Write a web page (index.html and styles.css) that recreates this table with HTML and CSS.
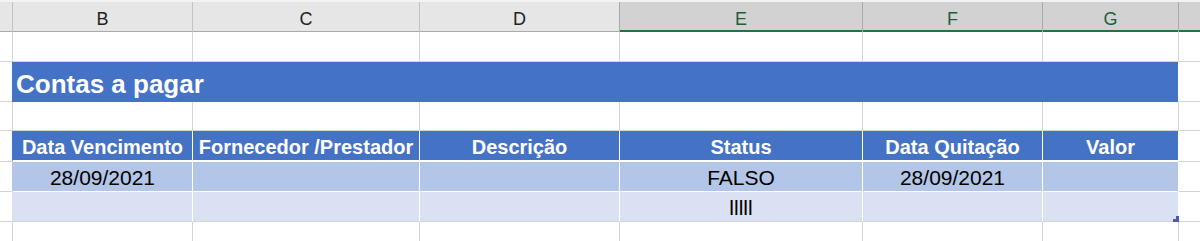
FILE: index.html
```html
<!DOCTYPE html>
<html lang="pt-BR">
<head>
<meta charset="utf-8">
<title>Contas a pagar</title>
<link rel="stylesheet" href="styles.css">
</head>
<body>
<div class="sheet">
  <div class="row col-heads">
    <div class="ch"></div>
    <div class="ch">B</div>
    <div class="ch">C</div>
    <div class="ch">D</div>
    <div class="ch sel">E</div>
    <div class="ch sel">F</div>
    <div class="ch sel">G</div>
    <div class="ch sel"></div>
  </div>

  <div class="row r-blank">
    <div class="c"></div><div class="c"></div><div class="c"></div><div class="c"></div>
    <div class="c"></div><div class="c"></div><div class="c"></div><div class="c"></div>
  </div>

  <div class="row r-title">
    <div class="c"></div>
    <div class="c title">Contas a pagar</div>
    <div class="c after"></div>
  </div>

  <div class="row r-gap">
    <div class="c"></div><div class="c"></div><div class="c"></div><div class="c"></div>
    <div class="c"></div><div class="c"></div><div class="c"></div><div class="c"></div>
  </div>

  <div class="row r-head">
    <div class="c"></div>
    <div class="c th first">Data Vencimento</div>
    <div class="c th">Fornecedor /Prestador</div>
    <div class="c th">Descrição</div>
    <div class="c th">Status</div>
    <div class="c th">Data Quitação</div>
    <div class="c th">Valor</div>
    <div class="c after"></div>
  </div>

  <div class="row r-data">
    <div class="c"></div>
    <div class="c td band1 first">28/09/2021</div>
    <div class="c td band1"></div>
    <div class="c td band1"></div>
    <div class="c td band1">FALSO</div>
    <div class="c td band1">28/09/2021</div>
    <div class="c td band1"></div>
    <div class="c after"></div>
  </div>

  <div class="row r-data">
    <div class="c"></div>
    <div class="c td band2 first"></div>
    <div class="c td band2"></div>
    <div class="c td band2"></div>
    <div class="c td band2">lllll</div>
    <div class="c td band2"></div>
    <div class="c td band2 last-cell"><span class="resize-handle"></span></div>
    <div class="c after"></div>
  </div>

  <div class="row r-tail">
    <div class="c"></div><div class="c"></div><div class="c"></div><div class="c"></div>
    <div class="c"></div><div class="c"></div><div class="c"></div><div class="c"></div>
  </div>
</div>
</body>
</html>
```

FILE: styles.css
```css
html, body {
  margin: 0;
  background: #ffffff;
}

.sheet {
  width: 1200px;
  height: 241px;
  overflow: hidden;
  font-family: "Liberation Sans", Arial, sans-serif;
  color: #000;
}

.row {
  display: grid;
  grid-template-columns: 12px 180px 227px 200px 243px 180px 136px 22px;
}

/* column letters strip */
.col-heads {
  height: 32px;
  padding-top: 2px;
  box-sizing: border-box;
  background: #f3f3f3;
}

.ch {
  box-sizing: border-box;
  background: #e6e6e6;
  border-left: 1px solid #c2c2c2;
  box-shadow: inset 0 -1px #ababab;
  display: flex;
  align-items: flex-end;
  justify-content: center;
  padding-bottom: 4px;
  font-size: 18px;
  line-height: 1;
  color: #222222;
}

.ch:first-child {
  border-left: none;
}

.ch.sel {
  background: #d2d2d2;
  border-left-color: #a9a9a9;
  box-shadow: inset 0 -2px #217346;
  color: #1f5e3d;
}

/* worksheet cells */
.c {
  box-sizing: border-box;
  border-left: 1px solid #d4d4d4;
  border-bottom: 1px solid #d4d4d4;
  display: flex;
  align-items: flex-end;
  justify-content: center;
  line-height: 1;
  white-space: nowrap;
}

.c:first-child {
  border-left: none;
}

.r-blank { height: 30px; }
.r-title { height: 40px; }
.r-gap   { height: 29px; }
.r-head  { height: 31px; }
.r-data  { height: 30px; }
.r-tail  { height: 30px; }

.r-title .title {
  grid-column: span 6;
  background: #4472c4;
  border-left-color: #4472c4;
  border-bottom-color: #4472c4;
  justify-content: flex-start;
  padding: 0 0 4px 3px;
  font-size: 26px;
  font-weight: bold;
  color: #ffffff;
}

.c.after {
  border-left-color: #ffffff;
}

.th {
  background: #4472c4;
  border-left-color: #ffffff;
  border-bottom: 2px solid #ffffff;
  padding-bottom: 3px;
  font-size: 20px;
  font-weight: bold;
  color: #ffffff;
}

.td {
  border-left-color: #ffffff;
  border-bottom-color: #ffffff;
  padding-bottom: 3px;
  font-size: 21px;
  color: #000000;
}

.th.first,
.td.first {
  border-left-color: transparent;
}

.band1 { background: #b4c6e7; }
.band1.first { border-left-color: #b4c6e7; }

.band2 {
  background: #d9e1f2;
  border-bottom-color: #d4d4d4;
}
.band2.first { border-left-color: #d9e1f2; }

.r-head .th.first { border-left-color: #4472c4; }

/* table resize handle in the last cell */
.last-cell {
  position: relative;
}

.resize-handle {
  position: absolute;
  right: -1px;
  bottom: -1px;
  width: 6px;
  height: 6px;
  background:
    linear-gradient(#4a5bb3, #4a5bb3) right top / 3px 6px no-repeat,
    linear-gradient(#4a5bb3, #4a5bb3) left bottom / 6px 3px no-repeat;
}
```
